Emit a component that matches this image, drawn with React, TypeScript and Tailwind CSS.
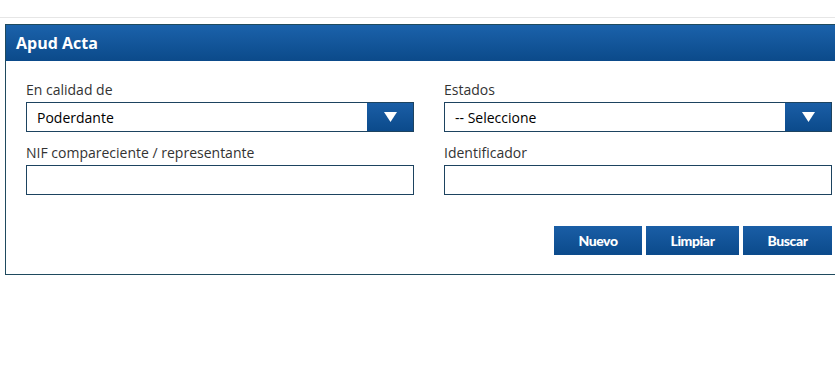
import React from "react";

const font = { fontFamily: '"Open Sans", "Noto Sans", sans-serif' };

function Arrow() {
  return (
    <div className="w-[46px] h-full bg-gradient-to-b from-[#1a5ea6] to-[#0b4a8b] flex items-center justify-center">
      <svg width="13" height="10" viewBox="0 0 13 10">
        <polygon points="0,0 13,0 6.5,10" fill="#ffffff" />
      </svg>
    </div>
  );
}

function Field({ label, value, select }: { label: string; value?: string; select?: boolean }) {
  return (
    <div className="flex flex-col">
      <label className="text-[14px] leading-[18px] text-[#333333] mb-[3px]">{label}</label>
      <div className="h-[30px] border border-[#1d4360] bg-white flex items-stretch">
        <div className="flex-1 flex items-center pl-[10px] text-[14px] text-black">{value}</div>
        {select && <Arrow />}
      </div>
    </div>
  );
}

function Btn({ label, w }: { label: string; w: string }) {
  return (
    <button
      className={`${w} h-[29px] bg-gradient-to-b from-[#1a5ea6] to-[#0b4a8b] text-white text-[14px] font-black tracking-[-0.4px] flex items-center justify-center`}
      style={{ fontFamily: 'Lato, "Open Sans", sans-serif' }}
    >
      {label}
    </button>
  );
}

export default function App() {
  return (
    <div className="w-[835px] h-[383px] bg-white overflow-hidden" style={font}>
      <div className="h-[18px] border-b border-[#e6e6e6]" />
      <div className="pt-[6px] pl-[5px]">
        <div className="w-[850px] border border-[#1f4a5e]">
          <div className="h-[36px] bg-gradient-to-b from-[#1b62ab] to-[#0b4a8a] flex items-center pl-[10px] text-white text-[16px] font-bold">
            Apud Acta
          </div>
          <div className="pl-[20px] pt-[20px] pb-[19px]">
            <div className="grid grid-cols-[388px_388px] gap-x-[30px] gap-y-[12px]">
              <Field label="En calidad de" value="Poderdante" select />
              <Field label="Estados" value="-- Seleccione" select />
              <Field label="NIF compareciente / representante" />
              <Field label="Identificador" />
            </div>
            <div className="w-[806px] flex justify-end gap-[4px] mt-[31px]">
              <Btn label="Nuevo" w="w-[88px]" />
              <Btn label="Limpiar" w="w-[93px]" />
              <Btn label="Buscar" w="w-[89px]" />
            </div>
          </div>
        </div>
      </div>
    </div>
  );
}
